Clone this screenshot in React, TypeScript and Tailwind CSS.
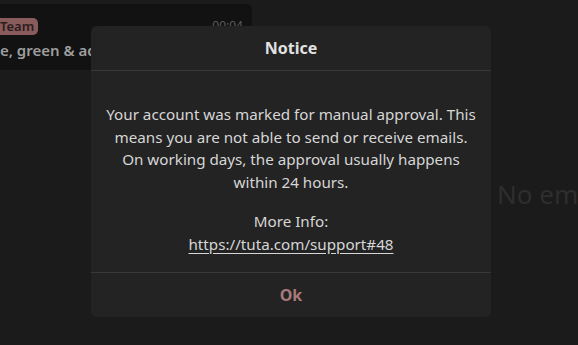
import React from 'react';

const font = { fontFamily: '"Noto Sans", "Open Sans", sans-serif' };

const MailListItem: React.FC = () => (
  <div className="mt-[4px] h-[66px] w-[252px] rounded-r-[5px] bg-[#121212]">
    <div className="flex items-start justify-between pt-[14px] pr-[9px]">
      <span className="h-[17px] rounded-r-[5px] bg-[#8a5b5b] pr-[4px] text-[13px] font-semibold leading-[17px] text-[#2a1d1d]">
        Team
      </span>
      <span className="pt-[1px] text-[12px] leading-[14px] text-[#5c5c5c]">00:04</span>
    </div>
    <div className="mt-[6px] whitespace-nowrap text-[15px] font-semibold leading-[18px] text-[#9e9e9e]">
      e, green &amp; ad-hoc
    </div>
  </div>
);

const NoticeDialog: React.FC = () => (
  <div className="absolute left-[91px] top-[26px] flex w-[400px] flex-col rounded-[6px] bg-[#232323]">
    <div className="flex h-[45px] items-center justify-center border-b border-[#383838]">
      <span className="text-[16px] font-bold text-[#e2e2e2]">Notice</span>
    </div>
    <div className="flex flex-col items-center px-[14px] pt-[32px] pb-[17px] text-center text-[15.2px] leading-[22.7px] text-[#d6d6d6]">
      <p>
        Your account was marked for manual approval. This means you are not able to send or receive emails. On
        working days, the approval usually happens within 24 hours.
      </p>
      <p className="mt-[16px]">More Info:</p>
      <a className="underline underline-offset-[3px]">https://tuta.com/support#48</a>
    </div>
    <div className="flex h-[45px] items-center justify-center border-t border-[#383838]">
      <span className="text-[16px] font-bold text-[#a87a7a]">Ok</span>
    </div>
  </div>
);

export default function App() {
  return (
    <div className="relative flex h-[345px] w-[578px] overflow-hidden bg-[#1b1b1b]" style={font}>
      <div className="flex w-[252px] shrink-0 flex-col">
        <MailListItem />
      </div>
      <div className="flex flex-1 items-center pl-[245px]">
        <span className="mt-[43px] whitespace-nowrap text-[26px] text-[#2e2e2e]">No emails selected</span>
      </div>
      <NoticeDialog />
    </div>
  );
}
